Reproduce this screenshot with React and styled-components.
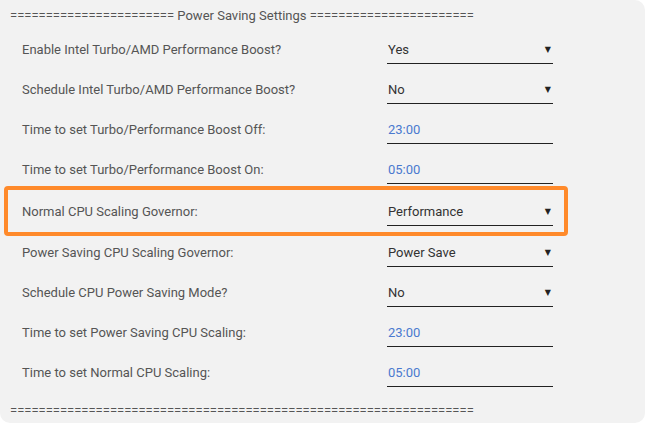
import React from "react";
import styled, { createGlobalStyle } from "styled-components";

const GlobalStyle = createGlobalStyle`
  html, body {
    margin: 0;
    padding: 0;
    background: #ffffff;
  }
  body {
    font-family: "Roboto", "Liberation Sans", sans-serif;
  }
`;

const rows = [
  { label: "Enable Intel Turbo/AMD Performance Boost?", value: "Yes", kind: "select" },
  { label: "Schedule Intel Turbo/AMD Performance Boost?", value: "No", kind: "select" },
  { label: "Time to set Turbo/Performance Boost Off:", value: "23:00", kind: "time" },
  { label: "Time to set Turbo/Performance Boost On:", value: "05:00", kind: "time" },
  { label: "Normal CPU Scaling Governor:", value: "Performance", kind: "select", highlight: true },
  { label: "Power Saving CPU Scaling Governor:", value: "Power Save", kind: "select" },
  { label: "Schedule CPU Power Saving Mode?", value: "No", kind: "select" },
  { label: "Time to set Power Saving CPU Scaling:", value: "23:00", kind: "time" },
  { label: "Time to set Normal CPU Scaling:", value: "05:00", kind: "time" },
];

const bar = (n) => "=".repeat(n);

const App = () => {
  return (
    <>
      <GlobalStyle />
      <Panel>
        <Divider>
          {bar(23)} Power Saving Settings {bar(23)}
        </Divider>
        <Rows>
          {rows.map((r) => (
            <Row key={r.label} $highlight={r.highlight}>
              <Label>{r.label}</Label>
              <Field>
                <Value $time={r.kind === "time"}>{r.value}</Value>
                {r.kind === "select" && <Caret>▼</Caret>}
              </Field>
            </Row>
          ))}
        </Rows>
        <Divider $footer>{bar(65)}</Divider>
      </Panel>
    </>
  );
};

export default App;

const Panel = styled.div`
  width: 645px;
  height: 423px;
  box-sizing: border-box;
  background-color: #f2f2f2;
  border-radius: 0 10px 10px 10px;
  padding: 0 0 0 4px;
  overflow: hidden;
`;

const Divider = styled.div`
  padding: ${(p) => (p.$footer ? "11px 0 0 6px" : "8px 0 5px 6px")};
  height: 16px;
  line-height: 16px;
  font-size: 13px;
  color: #555555;
  white-space: pre;
`;

const Rows = styled.div`
  display: flex;
  flex-direction: column;
  width: 564px;
`;

const Row = styled.div`
  display: flex;
  align-items: center;
  justify-content: space-between;
  height: 40px;
  padding: 0 15px 0 18px;

  ${(p) =>
    p.$highlight &&
    `
    height: 42px;
    margin: -3px 0 -4px;
    padding: 0 11px 0 14px;
    border: 4px solid #ff8a2b;
    border-radius: 4px;
  `}
`;

const Label = styled.span`
  font-size: 13px;
  color: #555555;
  white-space: nowrap;
`;

const Field = styled.div`
  display: flex;
  align-items: center;
  justify-content: space-between;
  width: 166px;
  height: 30px;
  box-sizing: border-box;
  border-bottom: 1px solid #222222;
  padding: 1px 2px 0 1px;
`;

const Value = styled.span`
  font-size: 13px;
  color: ${(p) => (p.$time ? "#4a79cf" : "#333333")};
`;

const Caret = styled.span`
  font-size: 8px;
  color: #222222;
  font-family: "DejaVu Sans", sans-serif;
`;
